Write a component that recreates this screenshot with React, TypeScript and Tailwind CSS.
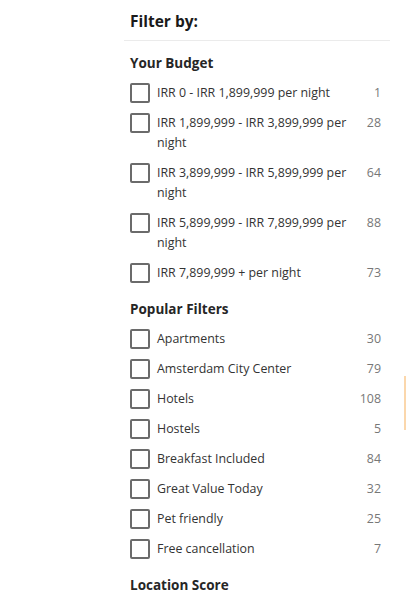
import React from 'react';

type Item = { label: string; count: number };

const budget: Item[] = [
  { label: 'IRR 0 - IRR 1,899,999 per night', count: 1 },
  { label: 'IRR 1,899,999 - IRR 3,899,999 per night', count: 28 },
  { label: 'IRR 3,899,999 - IRR 5,899,999 per night', count: 64 },
  { label: 'IRR 5,899,999 - IRR 7,899,999 per night', count: 88 },
  { label: 'IRR 7,899,999 + per night', count: 73 },
];

const popular: Item[] = [
  { label: 'Apartments', count: 30 },
  { label: 'Amsterdam City Center', count: 79 },
  { label: 'Hotels', count: 108 },
  { label: 'Hostels', count: 5 },
  { label: 'Breakfast Included', count: 84 },
  { label: 'Great Value Today', count: 32 },
  { label: 'Pet friendly', count: 25 },
  { label: 'Free cancellation', count: 7 },
];

const Row: React.FC<{ item: Item }> = ({ item }) => (
  <label className="flex items-start">
    <span className="h-5 w-5 shrink-0 rounded-[2px] border-2 border-[#6b6b6b] bg-white" />
    <span className="ml-[7px] flex-1 pr-[4px] text-[12.4px] leading-5 text-[#333]">{item.label}</span>
    <span className="w-[24px] shrink-0 text-right text-[12.4px] leading-5 text-[#777]">{item.count}</span>
  </label>
);

const Section: React.FC<{ title: string; items: Item[] }> = ({ title, items }) => (
  <div>
    <h3 className="text-[13.5px] font-bold leading-5 text-[#262626]">{title}</h3>
    <div className="mt-[10px] flex flex-col gap-[10px]">
      {items.map((it) => (
        <Row key={it.label} item={it} />
      ))}
    </div>
  </div>
);

export default function App() {
  return (
    <div className="relative h-[592px] w-[406px] overflow-hidden bg-white font-['Open_Sans',sans-serif]">
      <div className="ml-[124px] w-[266px]">
        <div className="px-[6px] pb-[8px] pt-[10px] text-[15.5px] font-bold leading-[22px] text-[#1a1a1a]">Filter by:</div>
        <div className="h-px bg-[#ebebeb]" />
        <div className="flex flex-col gap-[16px] pl-[6px] pr-[9px] pt-[12px]">
          <Section title="Your Budget" items={budget} />
          <Section title="Popular Filters" items={popular} />
          <h3 className="text-[13.5px] font-bold leading-5 text-[#262626]">Location Score</h3>
        </div>
      </div>
      <div className="absolute left-[404px] top-[376px] h-[54px] w-[2px] bg-[#fbd7ac]" />
    </div>
  );
}
